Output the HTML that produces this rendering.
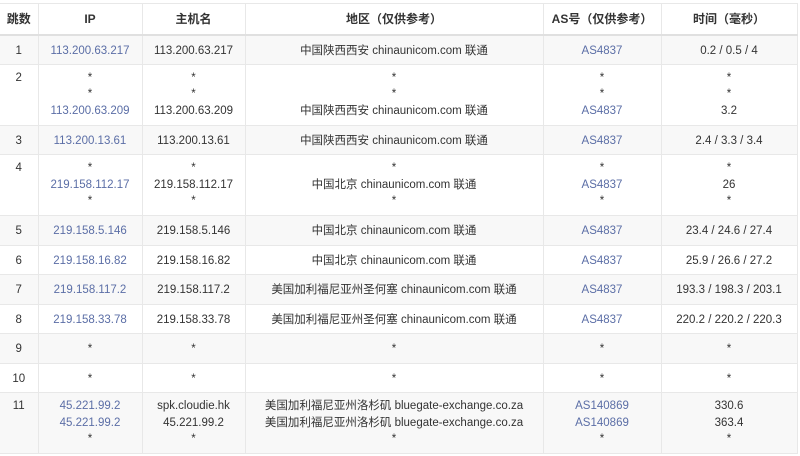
<!DOCTYPE html>
<html><head><meta charset="utf-8"><style>
body{margin:0;background:#fff;width:800px;height:456px;overflow:hidden;font-family:"Liberation Sans","Noto Sans CJK SC",sans-serif;font-size:11.5px;color:#333}
table{position:absolute;left:0;top:3px;width:797px;border-collapse:collapse;table-layout:fixed}
td,th{border:1px solid #e8e8e8;text-align:center;vertical-align:top;padding:7px 1px 0;line-height:16.5px;box-sizing:border-box;white-space:nowrap}
th{font-weight:bold;font-size:12px;height:31px;border-bottom:2px solid #e0e0e0;padding-top:7px}
tr.g td{background:#f8f8f8}
tr.s td{height:29.5px}
tr.m td{height:61px;padding-top:5px}
.a{color:#5b6ea6}
td:first-child,th:first-child{border-left:none}
</style></head><body>
<table>
<colgroup><col style="width:38px"><col style="width:104px"><col style="width:103px"><col style="width:298px"><col style="width:118px"><col style="width:136px"></colgroup>
<tr><th>跳数</th><th>IP</th><th>主机名</th><th>地区（仅供参考）</th><th>AS号（仅供参考）</th><th>时间（毫秒）</th></tr>
<tr class="g s"><td>1</td><td class="a">113.200.63.217</td><td>113.200.63.217</td><td>中国陕西西安 chinaunicom.com 联通</td><td class="a">AS4837</td><td>0.2 / 0.5 / 4</td></tr>
<tr class="m"><td>2</td><td>*<br>*<br><span class="a">113.200.63.209</span></td><td>*<br>*<br>113.200.63.209</td><td>*<br>*<br>中国陕西西安 chinaunicom.com 联通</td><td>*<br>*<br><span class="a">AS4837</span></td><td>*<br>*<br>3.2</td></tr>
<tr class="g s"><td>3</td><td class="a">113.200.13.61</td><td>113.200.13.61</td><td>中国陕西西安 chinaunicom.com 联通</td><td class="a">AS4837</td><td>2.4 / 3.3 / 3.4</td></tr>
<tr class="m"><td>4</td><td>*<br><span class="a">219.158.112.17</span><br>*</td><td>*<br>219.158.112.17<br>*</td><td>*<br>中国北京 chinaunicom.com 联通<br>*</td><td>*<br><span class="a">AS4837</span><br>*</td><td>*<br>26<br>*</td></tr>
<tr class="g s"><td>5</td><td class="a">219.158.5.146</td><td>219.158.5.146</td><td>中国北京 chinaunicom.com 联通</td><td class="a">AS4837</td><td>23.4 / 24.6 / 27.4</td></tr>
<tr class="s"><td>6</td><td class="a">219.158.16.82</td><td>219.158.16.82</td><td>中国北京 chinaunicom.com 联通</td><td class="a">AS4837</td><td>25.9 / 26.6 / 27.2</td></tr>
<tr class="g s"><td>7</td><td class="a">219.158.117.2</td><td>219.158.117.2</td><td>美国加利福尼亚州圣何塞 chinaunicom.com 联通</td><td class="a">AS4837</td><td>193.3 / 198.3 / 203.1</td></tr>
<tr class="s"><td>8</td><td class="a">219.158.33.78</td><td>219.158.33.78</td><td>美国加利福尼亚州圣何塞 chinaunicom.com 联通</td><td class="a">AS4837</td><td>220.2 / 220.2 / 220.3</td></tr>
<tr class="g s"><td>9</td><td>*</td><td>*</td><td>*</td><td>*</td><td>*</td></tr>
<tr class="s"><td>10</td><td>*</td><td>*</td><td>*</td><td>*</td><td>*</td></tr>
<tr class="g m"><td>11</td><td><span class="a">45.221.99.2<br>45.221.99.2</span><br>*</td><td>spk.cloudie.hk<br>45.221.99.2<br>*</td><td>美国加利福尼亚州洛杉矶 bluegate-exchange.co.za<br>美国加利福尼亚州洛杉矶 bluegate-exchange.co.za<br>*</td><td><span class="a">AS140869<br>AS140869</span><br>*</td><td>330.6<br>363.4<br>*</td></tr>
</table>
</body></html>
